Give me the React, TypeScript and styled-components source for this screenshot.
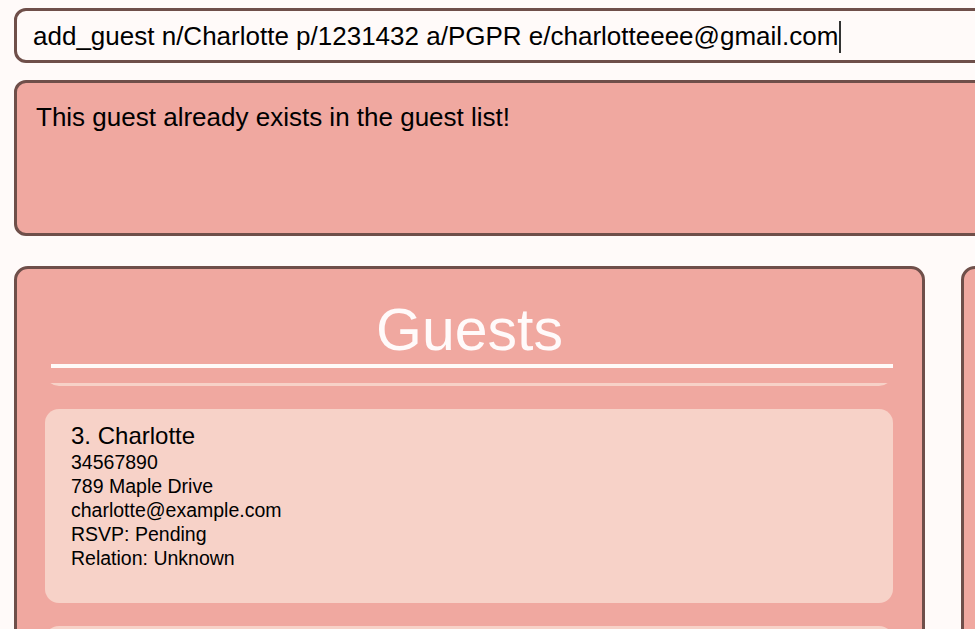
import React, { useLayoutEffect, useRef } from 'react';
import styled, { createGlobalStyle } from 'styled-components';

const Global = createGlobalStyle`
  html, body { margin: 0; padding: 0; background: #fffaf9; overflow: hidden; }
  body { font-family: "Liberation Sans", Arial, sans-serif; color: #000; }
`;

const Page = styled.div`
  width: 1880px;
  padding: 8px 14px 0;
  box-sizing: border-box;
  display: flex;
  flex-direction: column;
`;

const CommandBox = styled.div`
  height: 55px;
  box-sizing: border-box;
  border: 3px solid #6f4f4a;
  border-radius: 12px;
  background: #fffaf9;
  display: flex;
  align-items: center;
  padding: 2px 16px 0;
  font-size: 26px;
  white-space: pre;
`;

const Caret = styled.span`
  display: inline-block;
  width: 1.5px;
  height: 32px;
  background: #333;
  margin-left: 1px;
`;

const ResultBox = styled.div`
  margin-top: 17px;
  height: 156px;
  box-sizing: border-box;
  border: 3px solid #6f4f4a;
  border-radius: 12px;
  background: #f0a8a0;
  padding: 19px 19px;
  font-size: 26px;
`;

const PanelRow = styled.div`
  margin-top: 30px;
  display: flex;
  gap: 36px;
`;

const Panel = styled.section`
  width: 911px;
  height: 640px;
  flex-shrink: 0;
  box-sizing: border-box;
  border: 3px solid #6f4f4a;
  border-radius: 14px;
  background: #f0a8a0;
  display: flex;
  flex-direction: column;
  padding-top: 27px;
  overflow: hidden;
`;

const Title = styled.h2`
  margin: 0;
  font-weight: normal;
  font-size: 59px;
  line-height: normal;
  color: #fffafa;
  text-align: center;
`;

const Rule = styled.div`
  height: 4px;
  background: #fffaf8;
  margin: 0 29px 0 34px;
`;

const List = styled.div`
  position: relative;
  margin-top: 15px;
  flex: 1;
  overflow: hidden;
  padding: 0 29px 0 28px;
  display: flex;
  flex-direction: column;
  gap: 23px;
`;

const Card = styled.div`
  flex-shrink: 0;
  height: 194px;
  box-sizing: border-box;
  background: #f7d2c8;
  border-radius: 14px;
  padding: 13px 26px 0;
`;

const Name = styled.div`
  font-size: 24px;
  line-height: 28px;
`;

const Detail = styled.div`
  font-size: 19.5px;
  line-height: 24px;
`;

type Guest = { name: string; phone: string; address: string; email: string; rsvp: string; relation: string };

const guests: Guest[] = [
  { name: 'Alice', phone: '12345678', address: '123 Oak Street', email: 'alice@example.com', rsvp: 'Coming', relation: 'Bride' },
  { name: 'Bob', phone: '23456789', address: '456 Pine Avenue', email: 'bob@example.com', rsvp: 'Not Coming', relation: 'Groom' },
  { name: 'Charlotte', phone: '34567890', address: '789 Maple Drive', email: 'charlotte@example.com', rsvp: 'Pending', relation: 'Unknown' },
  { name: 'David', phone: '45678901', address: '321 Birch Road', email: 'david@example.com', rsvp: 'Coming', relation: 'Bride' },
  { name: 'Emma', phone: '56789012', address: '654 Cedar Lane', email: 'emma@example.com', rsvp: 'Pending', relation: 'Groom' },
  { name: 'Frank', phone: '67890123', address: '987 Elm Court', email: 'frank@example.com', rsvp: 'Coming', relation: 'Unknown' },
];

export default function App() {
  const listRef = useRef<HTMLDivElement>(null);
  const focusRef = useRef<HTMLDivElement>(null);

  useLayoutEffect(() => {
    if (listRef.current && focusRef.current) {
      listRef.current.scrollTop = focusRef.current.offsetTop - 26;
    }
  }, []);

  return (
    <>
      <Global />
      <Page>
        <CommandBox>
          add_guest n/Charlotte p/1231432 a/PGPR e/charlotteeee@gmail.com
          <Caret />
        </CommandBox>
        <ResultBox>This guest already exists in the guest list!</ResultBox>
        <PanelRow>
          <Panel>
            <Title>Guests</Title>
            <Rule />
            <List ref={listRef}>
              {guests.map((g, i) => (
                <Card key={g.name} ref={i === 2 ? focusRef : undefined}>
                  <Name>{i + 1}. {g.name}</Name>
                  <Detail>{g.phone}</Detail>
                  <Detail>{g.address}</Detail>
                  <Detail>{g.email}</Detail>
                  <Detail>RSVP: {g.rsvp}</Detail>
                  <Detail>Relation: {g.relation}</Detail>
                </Card>
              ))}
            </List>
          </Panel>
          <Panel>
            <Title>Vendors</Title>
            <Rule />
          </Panel>
        </PanelRow>
      </Page>
    </>
  );
}
